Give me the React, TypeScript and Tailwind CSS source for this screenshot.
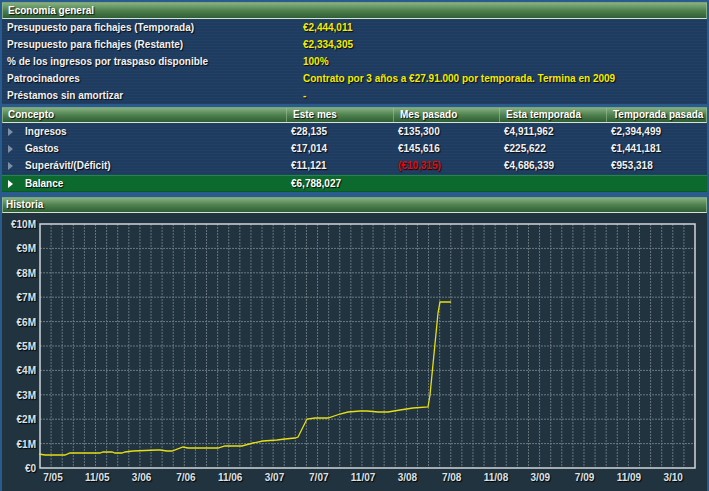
import React from 'react';

const economy = [
  { label: 'Presupuesto para fichajes (Temporada)', value: '€2,444,011' },
  { label: 'Presupuesto para fichajes (Restante)', value: '€2,334,305' },
  { label: '% de los ingresos por traspaso disponible', value: '100%' },
  { label: 'Patrocinadores', value: 'Contrato por 3 años a €27.91.000 por temporada. Termina en 2009' },
  { label: 'Préstamos sin amortizar', value: '-' },
];

const columns = ['Concepto', 'Este mes', 'Mes pasado', 'Esta temporada', 'Temporada pasada'];

const rows = [
  { name: 'Ingresos', values: ['€28,135', '€135,300', '€4,911,962', '€2,394,499'] },
  { name: 'Gastos', values: ['€17,014', '€145,616', '€225,622', '€1,441,181'] },
  { name: 'Superávit/(Déficit)', values: ['€11,121', '(€10,315)', '€4,686,339', '€953,318'] },
];

const yLabels = ['€10M', '€9M', '€8M', '€7M', '€6M', '€5M', '€4M', '€3M', '€2M', '€1M', '€0'];
const xLabels = ['7/05', '11/05', '3/06', '7/06', '11/06', '3/07', '7/07', '11/07', '3/08', '7/08', '11/08', '3/09', '7/09', '11/09', '3/10'];

// points in page coords, shifted into the chart svg below
const raw = [
  [39, 454], [45, 455], [65, 455], [70, 453], [100, 453], [103, 452], [112, 452], [115, 453], [122, 453],
  [125, 452], [133, 451], [157, 450], [160, 450], [167, 451], [172, 451], [183, 447], [188, 448], [218, 448],
  [225, 446], [242, 446], [253, 443], [263, 441], [277, 440], [285, 439], [295, 438], [298, 437], [307, 419],
  [315, 418], [328, 418], [340, 414], [348, 412], [360, 411], [367, 411], [378, 412], [388, 412], [400, 410],
  [413, 408], [428, 407], [430, 395], [438, 313], [440, 302], [451, 302],
];
const linePoints = raw.map(([x, y]) => `${x - 2},${y - 213}`).join(' ');

const shadow = '[text-shadow:1px_1px_1px_rgba(0,0,0,0.85)]';

const Header: React.FC<{ children: React.ReactNode; className?: string }> = ({ children, className = '' }) => (
  <div className={`bg-linear-to-b from-[#86b080] via-[#4f814f] to-[#2f5e33] border border-[#9cc097]/70 border-b-[#d6e2d2] text-white ${shadow} ${className}`}>
    {children}
  </div>
);

const Arrow: React.FC<{ color: string }> = ({ color }) => (
  <svg width="5" height="8" viewBox="0 0 5 8" className="shrink-0">
    <polygon points="0,0 5,4 0,8" fill={color} />
  </svg>
);

const Chart: React.FC = () => {
  const left = 38, right = 693, top = 11, bottom = 255;
  const step = (right - left) / 59;
  const rowH = (bottom - top) / 10;
  return (
    <svg width="705" height="278" className="block">
      {Array.from({ length: 58 }, (_, k) => (
        <line key={`v${k}`} x1={left + step * (k + 1)} x2={left + step * (k + 1)} y1={top} y2={bottom}
          stroke="#66757d" strokeWidth="1" strokeDasharray="2 1" />
      ))}
      {Array.from({ length: 9 }, (_, k) => (
        <line key={`h${k}`} x1={left} x2={right} y1={top + rowH * (k + 1)} y2={top + rowH * (k + 1)}
          stroke="#6b7a82" strokeWidth="1" strokeDasharray="2 1" />
      ))}
      <rect x={left} y={top} width={right - left} height={bottom - top} fill="none" stroke="#d0d6da" strokeWidth="1.5" />
      <polyline points={linePoints} fill="none" stroke="#e6df12" strokeWidth="1.3" />
      {yLabels.map((l, i) => (
        <text key={l} x={34} y={top + rowH * i + 4} textAnchor="end" fill="#dde2e5" fontSize="10" fontWeight="bold"
          fontFamily="'Liberation Sans', Arial, sans-serif" style={{ textShadow: '1px 1px 1px #000' }}>{l}</text>
      ))}
      {xLabels.map((l, i) => (
        <text key={l} x={51 + 44.3 * i} y={268} textAnchor="middle" fill="#dde2e5" fontSize="10" fontWeight="bold"
          fontFamily="'Liberation Sans', Arial, sans-serif" style={{ textShadow: '1px 1px 1px #000' }}>{l}</text>
      ))}
    </svg>
  );
};

export default function App() {
  const rowBg = 'bg-[#1e3b60] bg-[repeating-linear-gradient(180deg,rgba(255,255,255,0.025)_0px,rgba(255,255,255,0.025)_1px,transparent_1px,transparent_3px)]';
  return (
    <div className="w-[709px] h-[491px] overflow-hidden bg-[#2a5b8f] px-[2px] pt-[2px] text-[10px] font-bold font-['Liberation_Sans',Arial,sans-serif] leading-none">
      <Header className="h-[17px] flex items-center pl-[5px]">Economía general</Header>
      <div className={rowBg}>
        {economy.map((r) => (
          <div key={r.label} className="h-[17px] grid grid-cols-[301px_1fr] items-center">
            <span className={`pl-[5px] text-[#f2f2f2] ${shadow}`}>{r.label}</span>
            <span className={`text-[#f4ec00] ${shadow}`}>{r.value}</span>
          </div>
        ))}
      </div>
      <div className="h-[3px]" />
      <Header className="h-[16px] grid grid-cols-[283px_107px_106px_107px_1fr] items-stretch">
        {columns.map((c, i) => (
          <div key={c} className={`flex items-center ${i === 0 ? 'pl-[5px]' : 'pl-[6px] border-l border-[#a9c7a4]/50'}`}>{c}</div>
        ))}
      </Header>
      <div className={rowBg}>
        {rows.map((r) => (
          <div key={r.name} className="h-[17px] grid grid-cols-[283px_107px_106px_107px_1fr] items-center text-[#f2f2f2]">
            <div className="flex items-center pl-[6px] gap-[12px]">
              <Arrow color="#7e8fa3" />
              <span className={shadow}>{r.name}</span>
            </div>
            {r.values.map((v) => (
              <span key={v} className={`pl-[6px] ${shadow} ${v.startsWith('(') ? 'text-[#e4080a]' : ''}`}>{v}</span>
            ))}
          </div>
        ))}
        <div className="h-[1px]" />
      </div>
      <div className="h-[17px] grid grid-cols-[283px_1fr] items-center bg-[#0d6a2e] border-t border-[#1f8a45] border-b border-b-[#0a5a26] text-white">
        <div className="flex items-center pl-[6px] gap-[12px]">
          <Arrow color="#ffffff" />
          <span className={shadow}>Balance</span>
        </div>
        <span className={`pl-[6px] ${shadow}`}>€6,788,027</span>
      </div>
      <div className="h-[5px]" />
      <Header className="h-[16px] flex items-center pl-[3px]">Historia</Header>
      <div className="h-[278px] bg-[#21333f]">
        <Chart />
      </div>
    </div>
  );
}
